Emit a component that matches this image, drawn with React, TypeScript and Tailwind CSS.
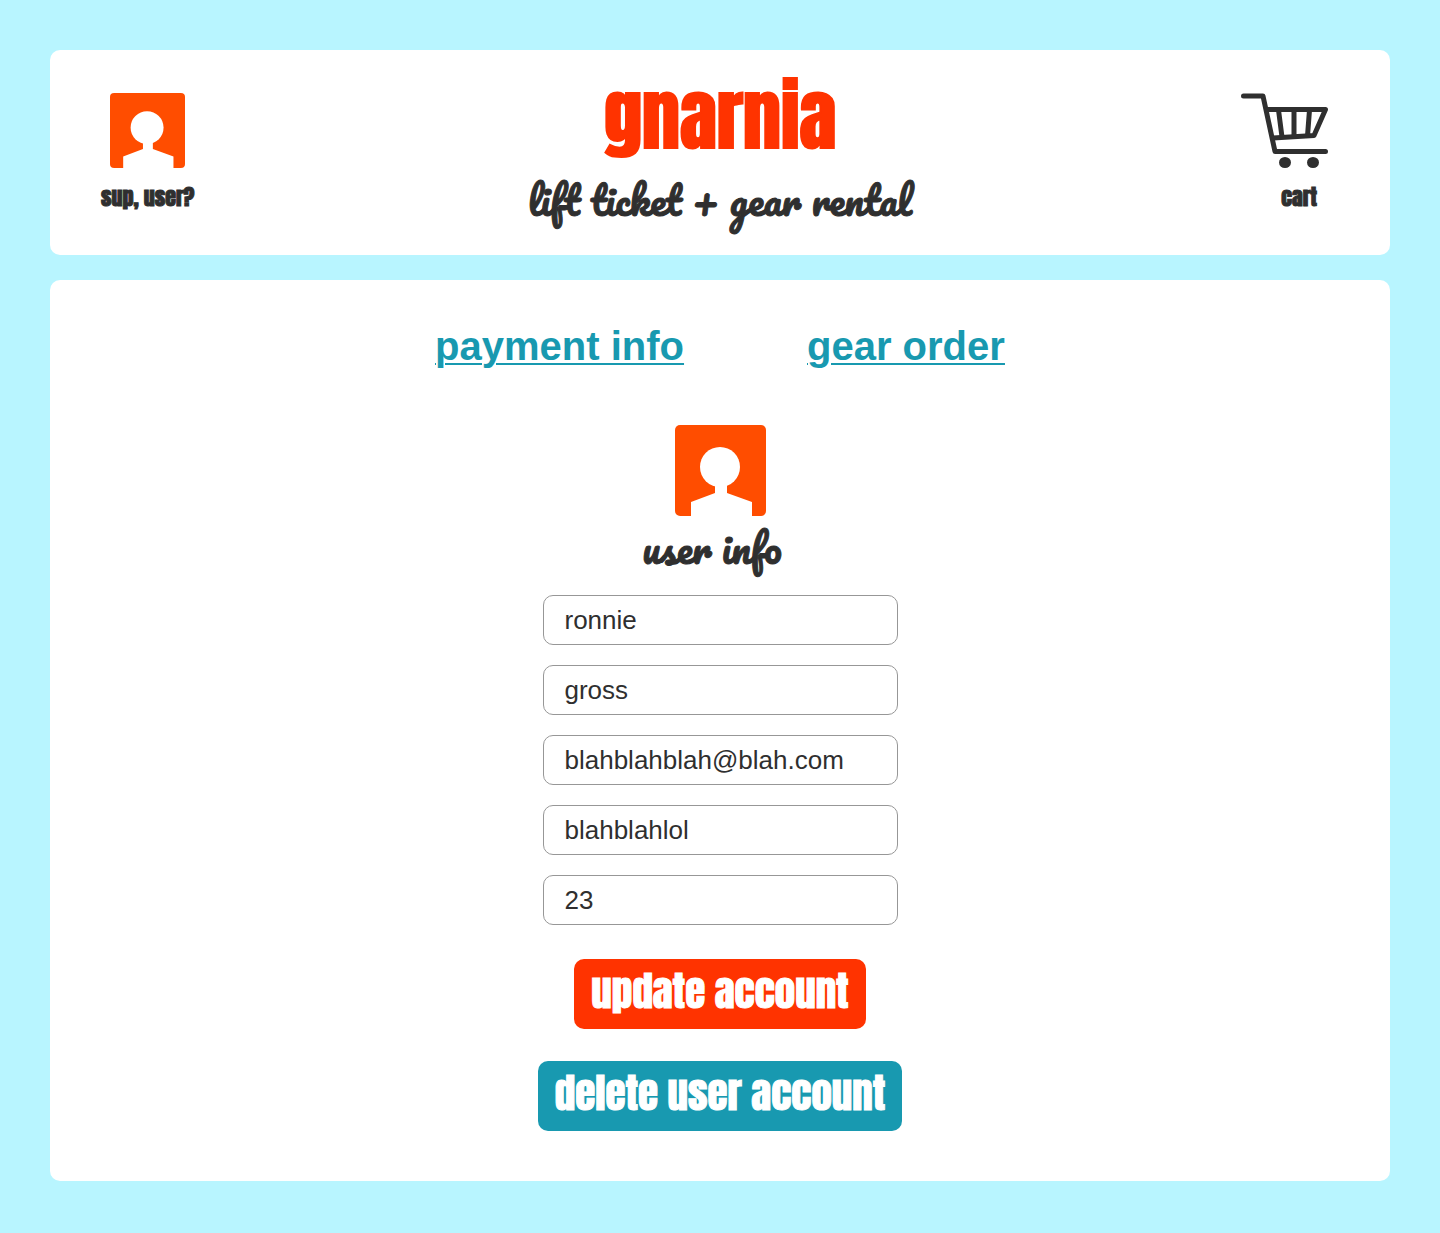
import React from "react";

const display = "font-['Anton','Roboto_Condensed','Roboto',sans-serif]";
const script = "font-['Pacifico','Lato',cursive] [-webkit-text-stroke:1px]";

function UserIcon({ className }: { className: string }) {
  return (
    <svg className={className} viewBox="0 0 91 91" fill="none" aria-hidden="true">
      <rect width="91" height="91" rx="5" fill="#ff4d00" />
      <circle cx="45" cy="42" r="20" fill="#fff" />
      <path d="M40 58H52V68L77 77V91H16V77L40 68Z" fill="#fff" />
    </svg>
  );
}

function CartIcon() {
  return (
    <svg className="h-[75px] w-[88px]" viewBox="0 0 88 75" fill="none" stroke="#2f2f2f" strokeWidth="5" strokeLinecap="round" strokeLinejoin="round" aria-hidden="true">
      <path d="M2.500 3H22L34 58.500H84.500" />
      <path d="M26 16.500H84.500L73 42.500L32 45" />
      <path d="M37.500 17L41 44M53 17V43.500M68.500 17L66.500 43" strokeLinecap="butt" />
      <ellipse cx="44" cy="69.500" rx="6" ry="5.500" fill="#2f2f2f" stroke="none" />
      <ellipse cx="72" cy="69.500" rx="6" ry="5.500" fill="#2f2f2f" stroke="none" />
    </svg>
  );
}

const fields = [
  { label: "First name", name: "first", type: "text", value: "ronnie" },
  { label: "Last name", name: "last", type: "text", value: "gross" },
  { label: "Email", name: "email", type: "email", value: "blahblahblah@blah.com" },
  { label: "Password", name: "secret", type: "text", value: "blahblahlol" },
  { label: "Age", name: "age", type: "text", value: "23" },
];

export default function App() {
  return (
    <div className="flex min-h-screen flex-col gap-[25px] bg-[#b8f5ff] px-[50px] pt-[50px] pb-[52px] font-['Liberation_Sans',Arial,sans-serif] text-[#2f2f2f]">
      <header className="grid grid-cols-[1fr_auto_1fr] items-start rounded-[10px] bg-white pr-[61px] pl-[51px] pb-[23px]">
        <a href="#user" className="mt-[43px] flex flex-col items-center gap-4 justify-self-start">
          <UserIcon className="size-[75px]" />
          <span className={`${display} text-[22px] leading-[26px] [-webkit-text-stroke:1px]`}>sup, user?</span>
        </a>
        <div className="flex flex-col items-center pt-[18px] pl-[10px]">
          <h1 className={`${display} text-[76px] leading-[96px] text-[#ff3300] [-webkit-text-stroke:2px]`}>gnarnia</h1>
          <p className={`${script} mt-1 text-[39px] leading-[64px]`}>lift ticket + gear rental</p>
        </div>
        <a href="#cart" className="mt-[43px] flex flex-col items-end gap-4 justify-self-end">
          <CartIcon />
          <span className={`${display} pr-3 text-[22px] leading-[26px] [-webkit-text-stroke:1px]`}>cart</span>
        </a>
      </header>

      <main className="flex flex-col items-center rounded-[10px] bg-white pt-[43px] pb-[50px]">
        <nav className="flex gap-[123px] text-[40px] leading-[46px] font-bold text-[#1899b0] underline decoration-2 underline-offset-3">
          <a href="#payment">payment info</a>
          <a href="#gear">gear order</a>
        </nav>
        <UserIcon className="mt-14 size-[91px]" />
        <h2 className={`${script} mt-1 pr-4 text-[39px] leading-[56px]`}>user info</h2>
        <form className="mt-[19px] flex flex-col items-center" onSubmit={(e) => e.preventDefault()}>
          <div className="flex flex-col gap-5">
            {fields.map((f) => (
              <input
                key={f.name}
                aria-label={f.label}
                name={f.name}
                type={f.type}
                defaultValue={f.value}
                className="h-[50px] w-[355px] rounded-[10px] border border-[#979797] bg-white px-[21px] text-[26px]"
              />
            ))}
          </div>
          <button type="submit" className={`${display} mt-[34px] rounded-[10px] bg-[#ff3300] px-[17px] pt-[7px] pb-[13px] text-[41px] leading-[50px] text-white [-webkit-text-stroke:1px]`}>
            update account
          </button>
          <button type="button" className={`${display} mt-8 rounded-[10px] bg-[#1899b0] px-[17px] pt-[7px] pb-[13px] text-[41px] leading-[50px] text-white [-webkit-text-stroke:1px]`}>
            delete user account
          </button>
        </form>
      </main>
    </div>
  );
}
